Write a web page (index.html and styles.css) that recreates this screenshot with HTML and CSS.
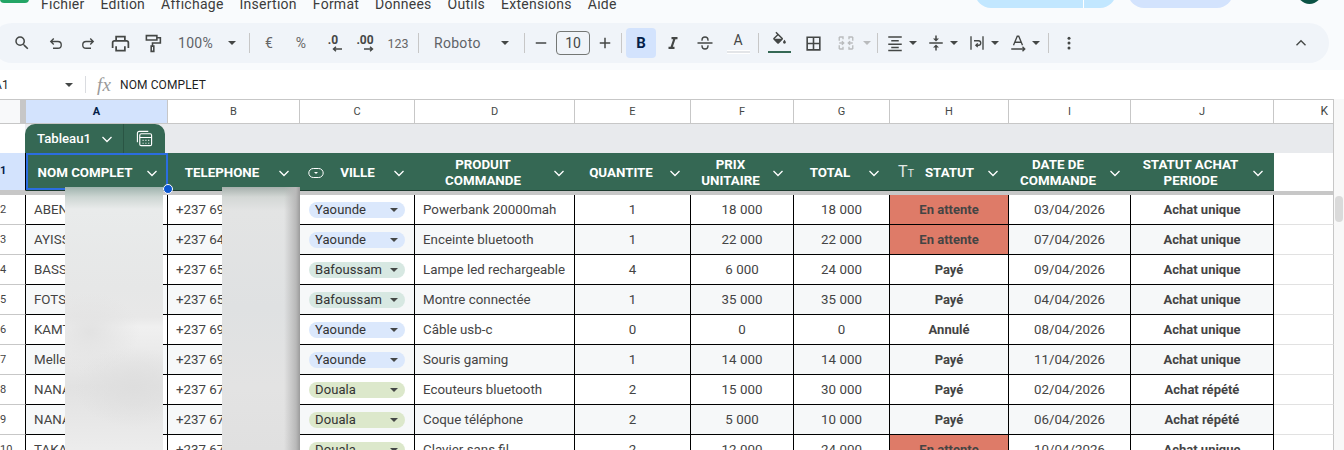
FILE: index.html
```html
<!DOCTYPE html>
<html lang="fr">
<head>
    <meta charset="UTF-8">
    <title>Commandes - Google Sheets</title>
    <link rel="stylesheet" href="styles.css">
</head>

<body>
    <!-- barre de menus (coupee en haut) -->
    <div class="topbar">
        <div class="topbar-in">
            <div class="logo"></div>
            <nav class="menus">
                <span>Fichier</span><span>Edition</span><span>Affichage</span><span>Insertion</span><span>Format</span><span>Données</span><span>Outils</span><span>Extensions</span><span>Aide</span>
            </nav>
            <div class="pill-blue"><i></i></div>
            <div class="pill-share"></div>
            <div class="avatar"></div>
        </div>
    </div>

    <!-- barre d'outils -->
    <div class="toolwrap">
        <div class="toolbar">
            <div class="btn btn-search"><svg class="ic" viewBox="0 0 24 24"><path d="M15.5 14h-.79l-.28-.27A6.47 6.47 0 0 0 16 9.5 6.5 6.5 0 1 0 9.5 16c1.61 0 3.09-.59 4.23-1.57l.27.28v.79l5 4.99L20.49 19l-4.99-5zm-6 0C7.01 14 5 11.99 5 9.5S7.01 5 9.5 5 14 7.01 14 9.5 11.99 14 9.5 14z"/></svg></div>
            <div class="btn"><svg class="ic line" viewBox="0 0 24 24"><path d="M9 6 5 10l4 4M5 10h9.5a4.5 4.5 0 0 1 0 9H8"/></svg></div>
            <div class="btn"><svg class="ic line" viewBox="0 0 24 24"><path d="m15 6 4 4-4 4M19 10H9.500a4.500 4.500 0 0 0 0 9H16"/></svg></div>
            <div class="btn"><svg class="ic ic-big" viewBox="0 0 24 24"><path d="M19 8h-1V3H6v5H5c-1.660 0-3 1.340-3 3v6h4v4h12v-4h4v-6c0-1.660-1.340-3-3-3zM8 5h8v3H8V5zm8 14H8v-4h8v4zm4-2h-2v-2H6v2H4v-6c0-.550.450-1 1-1h14c.550 0 1 .450 1 1v6z"/></svg></div>
            <div class="btn"><svg class="ic line ic-big" viewBox="0 0 24 24"><path d="M5 3h12v5H5zM17 5.500h4v6h-9V15M10.500 15h3v6h-3z"/></svg></div>
            <div class="select sel-zoom"><span>100%</span><b class="caret"></b></div>
            <i class="sep"></i>
            <div class="btn txt">€</div>
            <div class="btn txt">%</div>
            <div class="btn dec"><span>.0</span><svg viewBox="0 0 12 6"><path d="M11 3H3M5 .8 2.500 3 5 5.200"/></svg></div>
            <div class="btn dec"><span>.00</span><svg viewBox="0 0 12 6"><path d="M1 3h8M7 .8 9.500 3 7 5.200"/></svg></div>
            <div class="btn txt btn-123">123</div>
            <i class="sep"></i>
            <div class="select sel-font"><span>Roboto</span><b class="caret"></b></div>
            <i class="sep sep-tight"></i>
            <div class="btn btn-minus"><svg class="ic" viewBox="0 0 24 24"><path d="M5 11h14v2H5z"/></svg></div>
            <div class="size">10</div>
            <div class="btn btn-plus"><svg class="ic" viewBox="0 0 24 24"><path d="M11 5h2v6h6v2h-6v6h-2v-6H5v-2h6z"/></svg></div>
            <i class="sep"></i>
            <div class="btn btn-bold">B</div>
            <div class="btn btn-ital"><svg class="ic" viewBox="0 0 24 24"><path d="M10 4v3h2.210l-3.420 10H6v3h8v-3h-2.210l3.420-10H18V4z"/></svg></div>
            <div class="btn"><svg class="ic line" viewBox="0 0 24 24"><path d="M2 12h20M8 9V8a4 4 0 0 1 8 0v1M8 15v1a4 4 0 0 0 8 0v-1"/></svg></div>
            <div class="btn btn-color"><span>A</span><i class="under-white"></i></div>
            <i class="sep"></i>
            <div class="btn btn-fill"><svg class="ic" viewBox="0 0 24 24"><path d="M16.560 9.940 7.620 1 6.210 2.410l2.380 2.380-5.150 5.150c-.590.590-.590 1.540 0 2.120l5.500 5.500c.290.290.680.440 1.060.440s.770-.150 1.060-.440l5.500-5.500c.590-.580.590-1.530 0-2.120zM5.210 11 10 6.210 14.790 11H5.210zM19 12.500s-2 2.170-2 3.500c0 1.100.900 2 2 2s2-.900 2-2c0-1.330-2-3.500-2-3.500z"/></svg><i class="under-green"></i></div>
            <div class="btn btn-border"><svg class="ic" viewBox="0 0 24 24"><path d="M3 3v18h18V3H3zm8 16H5v-6h6v6zm0-8H5V5h6v6zm8 8h-6v-6h6v6zm0-8h-6V5h6v6z"/></svg></div>
            <div class="group group-merge off"><svg class="ic line" viewBox="0 0 24 24"><path d="M3 4h5v3M3 20h5v-3M21 4h-5v3M21 20h-5v-3M3 4v5M3 20v-5M21 4v5M21 20v-5M3 12h5M6.500 9.500 9 12l-2.500 2.500M21 12h-5M17.500 9.500 15 12l2.500 2.500"/></svg><b class="caret"></b></div>
            <i class="sep"></i>
            <div class="group"><svg class="ic" viewBox="0 0 24 24"><path d="M3 3h18v2H3zM7 8h10v2H7zM3 12.500h18v2H3zM7 17h10v2H7zM3 21h18v2H3z"/></svg><b class="caret"></b></div>
            <div class="group"><svg class="ic" viewBox="0 0 24 24"><path d="M3 11h18v2H3zM12 10 8 6h3V2h2v4h3zM12 14l4 4h-3v4h-2v-4H8z"/></svg><b class="caret"></b></div>
            <div class="group"><svg class="ic line" viewBox="0 0 24 24"><path d="M4 3v18M20 3v18M8 9h6a2.500 2.500 0 0 1 0 6h-3M13 12.500 10.500 15l2.500 2.500"/></svg><b class="caret"></b></div>
            <div class="group"><svg class="ic line" viewBox="0 0 24 24"><path d="m6 15 5-12h2l5 12M8 11h8M3 20h18M18 17l3 3-3 3"/></svg><b class="caret"></b></div>
            <i class="sep"></i>
            <div class="btn btn-more"><svg class="ic" viewBox="0 0 24 24"><circle cx="12" cy="5.500" r="2"/><circle cx="12" cy="12" r="2"/><circle cx="12" cy="18.500" r="2"/></svg></div>
            <div class="btn btn-collapse"><svg class="ic line" viewBox="0 0 24 24"><path d="m6 15 6-6 6 6"/></svg></div>
        </div>
    </div>

    <!-- barre de formule -->
    <div class="formula">
        <div class="namebox"><span>A1</span><b class="caret"></b></div>
        <i class="fsep"></i>
        <span class="fx">fx</span>
        <span class="ftext">NOM COMPLET</span>
    </div>

    <div class="area">
        <div class="sheet">
            <div class="row colhead">
                <div class="corner"></div>
                <div class="on">A</div><div>B</div><div>C</div><div>D</div><div>E</div><div>F</div><div>G</div><div>H</div><div>I</div><div>J</div><div class="col-k">K</div>
            </div>

            <div class="titlerow">
                <div class="titlegap"></div>
                <div class="tab">
                    <div class="tab-name"><span>Tableau1</span><svg class="chev" viewBox="0 0 16 16"><path d="m3.500 6 4.500 4.500L12.500 6"/></svg></div>
                    <div class="tab-calc"><svg viewBox="0 0 18 18"><path d="M1.500 13V3.500a2 2 0 0 1 2-2H13"/><rect x="4" y="4" width="12.500" height="12.500" rx="1.500"/><path d="M4 8h12.500M7 11h1M10 11h1M13 11h1M7 14h1M10 14h1M13 14h1"/></svg></div>
                </div>
            </div>

            <div class="row headrow">
                <div class="rh rh-on">1</div>
                <div class="hc hc-sel"><span>NOM COMPLET</span><svg class="chev" viewBox="0 0 16 16"><path d="m3.500 6 4.500 4.500L12.500 6"/></svg><i class="handle"></i></div>
                <div class="hc"><span>TELEPHONE</span><svg class="chev" viewBox="0 0 16 16"><path d="m3.500 6 4.500 4.500L12.500 6"/></svg></div>
                <div class="hc"><svg class="hic" viewBox="0 0 16 16"><rect x=".8" y="3.500" width="14.400" height="9" rx="4.500"/><path d="M6 7h4L8 9z"/></svg><span>VILLE</span><svg class="chev" viewBox="0 0 16 16"><path d="m3.500 6 4.500 4.500L12.500 6"/></svg></div>
                <div class="hc"><span>PRODUIT<br>COMMANDE</span><svg class="chev" viewBox="0 0 16 16"><path d="m3.500 6 4.500 4.500L12.500 6"/></svg></div>
                <div class="hc"><span>QUANTITE</span><svg class="chev" viewBox="0 0 16 16"><path d="m3.500 6 4.500 4.500L12.500 6"/></svg></div>
                <div class="hc"><span>PRIX<br>UNITAIRE</span><svg class="chev" viewBox="0 0 16 16"><path d="m3.500 6 4.500 4.500L12.500 6"/></svg></div>
                <div class="hc"><span>TOTAL</span><svg class="chev" viewBox="0 0 16 16"><path d="m3.500 6 4.500 4.500L12.500 6"/></svg></div>
                <div class="hc"><em class="tt">T<small>T</small></em><span>STATUT</span><svg class="chev" viewBox="0 0 16 16"><path d="m3.500 6 4.500 4.500L12.500 6"/></svg></div>
                <div class="hc"><span>DATE DE<br>COMMANDE</span><svg class="chev" viewBox="0 0 16 16"><path d="m3.500 6 4.500 4.500L12.500 6"/></svg></div>
                <div class="hc"><span>STATUT ACHAT<br>PERIODE</span><svg class="chev" viewBox="0 0 16 16"><path d="m3.500 6 4.500 4.500L12.500 6"/></svg></div>
                <div class="empty-head"></div>
            </div>
            <div class="freeze"></div>

            <div class="row data">
                <div class="rh">2</div><div class="c">ABEN</div><div class="c">+237 69</div>
                <div class="c chipcell"><div class="chip yaounde"><span>Yaounde</span><b class="caret"></b></div></div>
                <div class="c">Powerbank 20000mah</div><div class="c mid">1</div><div class="c mid">18 000</div><div class="c mid">18 000</div>
                <div class="c mid strong late">En attente</div><div class="c mid">03/04/2026</div><div class="c mid strong">Achat unique</div><div class="k"></div>
            </div>
            <div class="row data alt">
                <div class="rh">3</div><div class="c">AYISS</div><div class="c">+237 64</div>
                <div class="c chipcell"><div class="chip yaounde"><span>Yaounde</span><b class="caret"></b></div></div>
                <div class="c">Enceinte bluetooth</div><div class="c mid">1</div><div class="c mid">22 000</div><div class="c mid">22 000</div>
                <div class="c mid strong late">En attente</div><div class="c mid">07/04/2026</div><div class="c mid strong">Achat unique</div><div class="k"></div>
            </div>
            <div class="row data">
                <div class="rh">4</div><div class="c">BASS</div><div class="c">+237 65</div>
                <div class="c chipcell"><div class="chip bafoussam"><span>Bafoussam</span><b class="caret"></b></div></div>
                <div class="c">Lampe led rechargeable</div><div class="c mid">4</div><div class="c mid">6 000</div><div class="c mid">24 000</div>
                <div class="c mid strong">Payé</div><div class="c mid">09/04/2026</div><div class="c mid strong">Achat unique</div><div class="k"></div>
            </div>
            <div class="row data alt">
                <div class="rh">5</div><div class="c">FOTS</div><div class="c">+237 65</div>
                <div class="c chipcell"><div class="chip bafoussam"><span>Bafoussam</span><b class="caret"></b></div></div>
                <div class="c">Montre connectée</div><div class="c mid">1</div><div class="c mid">35 000</div><div class="c mid">35 000</div>
                <div class="c mid strong">Payé</div><div class="c mid">04/04/2026</div><div class="c mid strong">Achat unique</div><div class="k"></div>
            </div>
            <div class="row data">
                <div class="rh">6</div><div class="c">KAMT</div><div class="c">+237 69</div>
                <div class="c chipcell"><div class="chip yaounde"><span>Yaounde</span><b class="caret"></b></div></div>
                <div class="c">Câble usb-c</div><div class="c mid">0</div><div class="c mid">0</div><div class="c mid">0</div>
                <div class="c mid strong">Annulé</div><div class="c mid">08/04/2026</div><div class="c mid strong">Achat unique</div><div class="k"></div>
            </div>
            <div class="row data alt">
                <div class="rh">7</div><div class="c">Melle</div><div class="c">+237 69</div>
                <div class="c chipcell"><div class="chip yaounde"><span>Yaounde</span><b class="caret"></b></div></div>
                <div class="c">Souris gaming</div><div class="c mid">1</div><div class="c mid">14 000</div><div class="c mid">14 000</div>
                <div class="c mid strong">Payé</div><div class="c mid">11/04/2026</div><div class="c mid strong">Achat unique</div><div class="k"></div>
            </div>
            <div class="row data">
                <div class="rh">8</div><div class="c">NANA</div><div class="c">+237 67</div>
                <div class="c chipcell"><div class="chip douala"><span>Douala</span><b class="caret"></b></div></div>
                <div class="c">Ecouteurs bluetooth</div><div class="c mid">2</div><div class="c mid">15 000</div><div class="c mid">30 000</div>
                <div class="c mid strong">Payé</div><div class="c mid">02/04/2026</div><div class="c mid strong">Achat répété</div><div class="k"></div>
            </div>
            <div class="row data alt">
                <div class="rh">9</div><div class="c">NANA</div><div class="c">+237 67</div>
                <div class="c chipcell"><div class="chip douala"><span>Douala</span><b class="caret"></b></div></div>
                <div class="c">Coque téléphone</div><div class="c mid">2</div><div class="c mid">5 000</div><div class="c mid">10 000</div>
                <div class="c mid strong">Payé</div><div class="c mid">06/04/2026</div><div class="c mid strong">Achat répété</div><div class="k"></div>
            </div>
            <div class="row data">
                <div class="rh">10</div><div class="c">TAKA</div><div class="c">+237 67</div>
                <div class="c chipcell"><div class="chip douala"><span>Douala</span><b class="caret"></b></div></div>
                <div class="c">Clavier sans fil</div><div class="c mid">2</div><div class="c mid">12 000</div><div class="c mid">24 000</div>
                <div class="c mid strong late">En attente</div><div class="c mid">10/04/2026</div><div class="c mid strong">Achat unique</div><div class="k"></div>
            </div>

            <!-- zones floutees par-dessus les noms et numeros -->
            <div class="blur blur-name"></div>
            <div class="blur blur-phone"></div>
        </div>
        <div class="scrollbar"><div class="thumb"></div></div>
    </div>
</body></html>
```

FILE: styles.css
```css
* {
    box-sizing: border-box;
}

html,
body {
    margin: 0;
    height: 450px;
    overflow: hidden;
}

body {
    background-color: #fff;
    color: #444746;
    font-family: Roboto, "Noto Sans", sans-serif;
}

/* menus */
.topbar {
    height: 23px;
    overflow: hidden;
    background-color: #f9fbfd;
}

.topbar-in {
    display: flex;
    align-items: flex-end;
    height: 40px;
    margin-top: -28px;
}

.logo {
    width: 29px;
    height: 20px;
    margin-bottom: 9px;
    border-radius: 4px;
    background-color: #23a566;
}

.menus {
    display: flex;
    gap: 16px;
    width: 934px;
    margin-left: 12px;
    font-size: 14px;
    line-height: 16px;
    letter-spacing: .25px;
    color: #3c3c3c;
}

.pill-blue {
    display: flex;
    justify-content: flex-end;
    width: 141px;
    height: 24px;
    margin-bottom: 4px;
    padding-right: 32px;
    border-radius: 0 0 16px 16px;
    background-color: #c2e7ff;
}

.pill-blue i {
    width: 1px;
    background-color: #fff;
}

.pill-share {
    width: 105px;
    height: 24px;
    margin: 0 0 4px 12px;
    border-radius: 0 0 16px 16px;
    background-color: #d3e3fd;
}

.avatar {
    width: 25px;
    height: 25px;
    margin: 0 0 8px 64px;
    border-radius: 50%;
    background-color: #0b5345;
}

/* barre d'outils */
.toolwrap {
    height: 47px;
    background-color: #f9fbfd;
}

.toolbar {
    display: flex;
    align-items: center;
    width: 1337px;
    height: 40px;
    margin-left: -8px;
    padding: 0 12px 0 14px;
    border-radius: 20px;
    background-color: #f0f4f9;
}

.btn {
    display: flex;
    flex: none;
    align-items: center;
    justify-content: center;
    width: 32px;
    height: 30px;
}

.ic {
    display: block;
    flex: none;
    width: 18px;
    height: 18px;
    fill: #444746;
}

.ic.line {
    fill: none;
    stroke: #444746;
    stroke-width: 1.8;
}

.ic-big {
    width: 21px;
    height: 21px;
}

.btn-search {
    margin-right: 2px;
}

.caret {
    display: block;
    flex: none;
    width: 0;
    height: 0;
    border-top: 4px solid #444746;
    border-right: 4px solid transparent;
    border-left: 4px solid transparent;
}

.sep {
    flex: none;
    width: 1px;
    height: 20px;
    margin: 0 3px;
    background-color: #c7c7c7;
}

.sep-tight {
    margin-right: 0;
}

.select {
    display: flex;
    flex: none;
    align-items: center;
    justify-content: space-between;
    font-size: 14px;
    letter-spacing: .3px;
    color: #5f6368;
}

.sel-zoom {
    width: 78px;
    padding: 0 10px;
}

.sel-font {
    width: 99px;
    padding: 0 12px;
}

.txt {
    font-size: 14px;
    color: #666;
}

.btn-123 {
    width: 34px;
    font-size: 12.500px;
}

.dec {
    position: relative;
    flex-direction: column;
    font-size: 12px;
    font-weight: 700;
    line-height: 12px;
    color: #444746;
}

.dec svg {
    width: 12px;
    height: 6px;
    margin-left: 8px;
    fill: none;
    stroke: #444746;
    stroke-width: 1.4;
}

.btn-minus {
    width: 26px;
    margin-left: 3px;
}

.btn-plus {
    width: 27px;
    margin-left: 1px;
}

.size {
    flex: none;
    width: 34px;
    height: 24px;
    margin-left: 2px;
    border: 1px solid #747775;
    border-radius: 4px;
    font-size: 14px;
    line-height: 22px;
    text-align: center;
}

.btn-bold {
    width: 30px;
    margin-left: 1px;
    border-radius: 4px;
    background-color: #d3e3fd;
    font-size: 15px;
    font-weight: 700;
    color: #041e49;
}

.btn-ital {
    margin-left: 1px;
}

.btn-color,
.btn-fill {
    flex-direction: column;
    width: 34px;
}

.btn-color span {
    font-size: 14px;
    line-height: 16px;
}

.under-white {
    display: block;
    width: 23px;
    height: 4px;
    margin-top: 2px;
    border-top: 1px solid #fff;
    border-bottom: 1px solid #fff;
    background-color: #e3e5e8;
}

.btn-fill .ic {
    width: 17px;
    height: 17px;
    margin-top: -3px;
}

.under-green {
    display: block;
    width: 23px;
    height: 2px;
    margin-top: 3px;
    background-color: #356854;
}

.btn-border {
    width: 34px;
}

.btn-border .ic {
    width: 19px;
    height: 19px;
}

.group {
    display: flex;
    flex: none;
    align-items: center;
    gap: 5px;
    width: 41px;
    padding-left: 5px;
}

.group-merge {
    gap: 8px;
    width: 44px;
    padding-left: 7px;
}

.off .ic {
    stroke: #b9bbbd;
    stroke-width: 1.8;
}

.off .caret {
    border-top-color: #b9bbbd;
}

.btn-more {
    margin-left: 1px;
}

.btn-collapse {
    margin-left: auto;
}

/* formule */
.formula {
    display: flex;
    align-items: center;
    height: 29px;
    font-size: 12px;
    letter-spacing: .1px;
}

.namebox {
    display: flex;
    align-items: center;
    justify-content: space-between;
    width: 80px;
    margin-left: -7px;
    padding-left: 1px;
    color: #1f1f1f;
}

.fsep {
    width: 1px;
    height: 17px;
    margin-left: 12px;
    background-color: #dadce0;
}

.fx {
    width: 23px;
    margin-left: 11px;
    font-family: "Liberation Serif", serif;
    font-size: 19px;
    font-style: italic;
    color: #9a9a9a;
}

.ftext {
    color: #1f1f1f;
}

/* feuille */
.area {
    display: flex;
}

.sheet {
    position: relative;
    flex: none;
    width: 1334px;
}

.row {
    display: grid;
    grid-template-columns: 26px 142px 132px 115px 160px 116px 103px 96px 119px 122px 143px 60px;
}

.colhead {
    height: 25px;
    font-size: 11px;
    line-height: 23px;
    text-align: center;
}

.colhead > div {
    border-top: 1px solid #c7c7c7;
    border-right: 1px solid #c7c7c7;
    border-bottom: 1px solid #c7c7c7;
}

.colhead .corner {
    border-right: 0;
    background: linear-gradient(to right, #f8f9fa 20px, #c7c7c7 20px);
}

.colhead .on {
    background-color: #d3e3fd;
    font-weight: 700;
    color: #041e49;
}

.colhead .col-k {
    padding-right: 5px;
    font-size: 12px;
    text-align: right;
}

.titlerow {
    display: flex;
    height: 29px;
    border-right: 1px solid #c7c7c7;
    background-color: #e8eaed;
}

.titlegap {
    width: 25px;
    background-color: #fff;
}

.tab {
    display: flex;
    width: 140px;
    height: 29px;
    border-radius: 10px 10px 0 0;
    background-color: #356854;
    color: #fff;
}

.tab-name {
    display: flex;
    align-items: center;
    width: 99px;
    padding-left: 12px;
    border-right: 1px solid #2a5544;
    font-size: 13.200px;
    font-weight: 500;
}

.tab-name .chev {
    margin-left: 8px;
}

.tab-calc {
    display: flex;
    flex: 1;
    align-items: center;
    justify-content: center;
}

.tab-calc svg {
    width: 17px;
    height: 17px;
    fill: none;
    stroke: #fff;
    stroke-width: 1.2;
}

.chev {
    flex: none;
    width: 16px;
    height: 16px;
    fill: none;
    stroke: #fff;
    stroke-width: 1.3;
}

.headrow {
    height: 38px;
}

.rh {
    padding-right: 20px;
    border-right: 1px solid #000;
    border-bottom: 1px solid #c7c7c7;
    background-color: #fff;
    font-size: 11px;
    line-height: 29px;
    text-align: right;
    color: #444;
}

.rh-on {
    background-color: #d3e3fd;
    font-weight: 700;
    line-height: 36px;
    color: #041e49;
}

.hc {
    position: relative;
    display: flex;
    align-items: center;
    padding: 2px 8px 0 0;
    border-bottom: 1px solid #1c3a2e;
    background-color: #356854;
    font-size: 13.330px;
    font-weight: 700;
    line-height: 16px;
    white-space: nowrap;
    color: #fff;
}

.hc > span {
    flex: 1;
    text-align: center;
}

.hc-sel {
    box-shadow: inset 0 0 0 2px #2b6de0;
}

/* poignee de la selection */
.handle {
    position: absolute;
    right: -5px;
    bottom: -4px;
    z-index: 3;
    width: 10px;
    height: 10px;
    border: 1px solid #fff;
    border-radius: 50%;
    background-color: #0b57d0;
}

.hic {
    flex: none;
    width: 16px;
    height: 16px;
    margin-left: 8px;
    fill: #fff;
}

.hic rect {
    fill: none;
    stroke: #fff;
}

.tt {
    flex: none;
    width: 16px;
    margin-left: 8px;
    font-size: 16px;
    font-style: normal;
    font-weight: 400;
    color: #e3e8e5;
}

.tt small {
    font-size: 11px;
}

.empty-head {
    border-right: 1px solid #c7c7c7;
    background-color: #fff;
}

.freeze {
    height: 4px;
    background-color: #c7c7c7;
}

.data {
    height: 30px;
}

.c {
    padding: 1px 0 0 8px;
    overflow: hidden;
    border-right: 1px solid #000;
    border-bottom: 1px solid #000;
    background-color: #fff;
    font-size: 13.330px;
    line-height: 28px;
    white-space: nowrap;
    color: #444;
}

.alt .c {
    background-color: #f6f8f9;
}

.mid {
    padding-left: 0;
    text-align: center;
}

.strong {
    font-size: 13px;
    font-weight: 700;
}

.alt .late,
.late {
    background-color: #de7b68;
}

.k {
    border-right: 1px solid #c7c7c7;
    border-bottom: 1px solid #e1e1e1;
    background-color: #fff;
}

.c.chipcell {
    display: flex;
    align-items: center;
    padding: 0 0 0 9px;
}

.chip {
    display: flex;
    align-items: center;
    justify-content: space-between;
    width: 96px;
    height: 16px;
    padding: 0 7px 0 6px;
    border-radius: 8px;
    font-size: 13px;
    line-height: 16px;
    letter-spacing: .1px;
    color: #333;
}

.yaounde {
    background-color: #dbe8fc;
}

.bafoussam {
    background-color: #d7e8e2;
}

.douala {
    background-color: #dce8cb;
}

.blur {
    position: absolute;
    top: 88px;
    bottom: 0;
}

.blur-name {
    left: 65px;
    width: 98px;
    background:
        radial-gradient(ellipse 60px 40px at 70% 200px, #dedede, transparent),
        radial-gradient(ellipse 50px 40px at 25% 145px, #e2e2e2, transparent),
        linear-gradient(to bottom, #9fb3ad 0, #ccd5d2 10px, #e9ebeb 22px, #e6e7e7 100px, #e8e8e8 130px, #f0f0f0 140px, #e2e2e2 200px, #ececec 262px);
}

.blur-phone {
    left: 222px;
    width: 78px;
    background:
        linear-gradient(to right, transparent 62px, #b9b9b9 74px, #9b9b9b 78px),
        linear-gradient(to bottom, #a6b0ac 0, #d3d7d5 10px, #e3e4e4 24px, #dfe1e2 120px, #e3e3e3 200px, #e0e0e0 262px);
}

.scrollbar {
    flex: 1;
    background-color: #f8f8f8;
}

.thumb {
    width: 8px;
    height: 26px;
    margin: 97px 0 0 1px;
    border-radius: 4px;
    background-color: #dadada;
}
```
